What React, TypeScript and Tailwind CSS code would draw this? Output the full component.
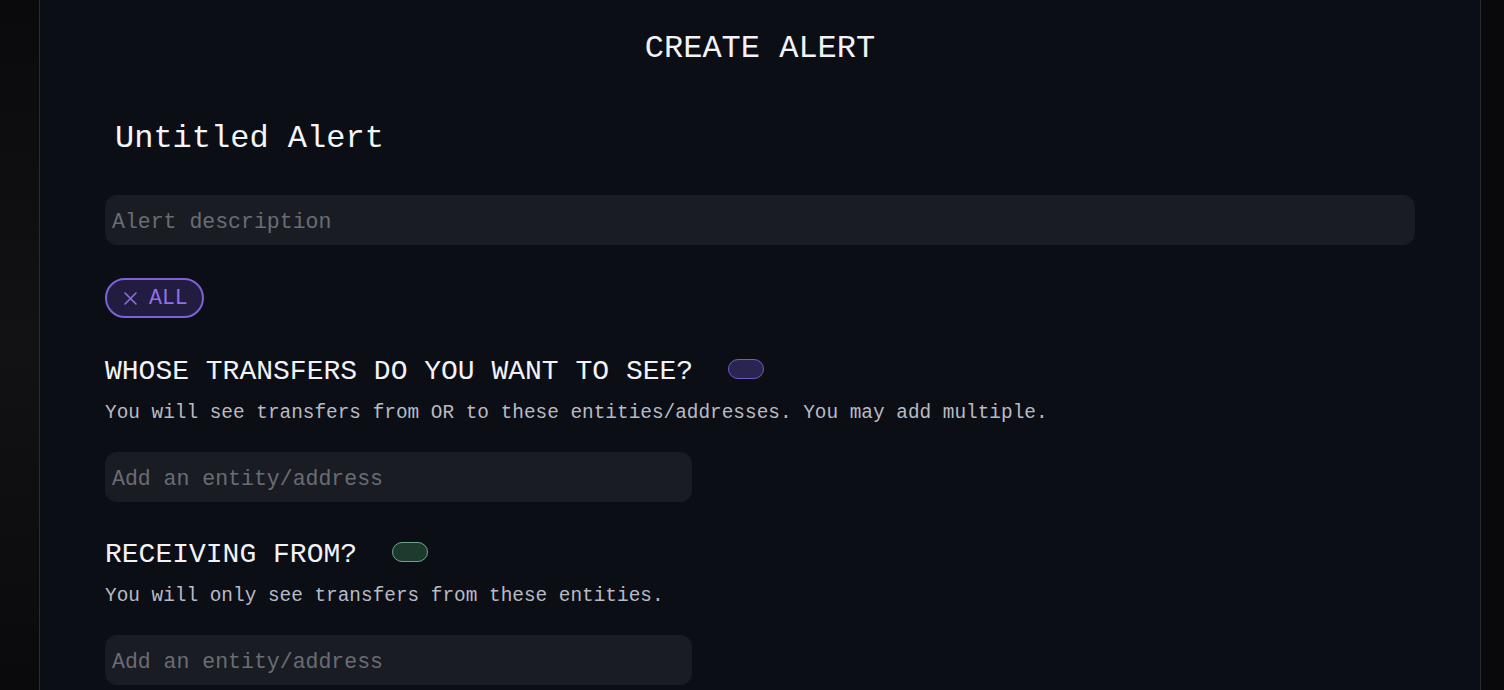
import React, { useState } from 'react';

const mono = "font-['Liberation_Mono',monospace]";

interface ToggleProps {
  tone: 'purple' | 'green';
}

const Toggle: React.FC<ToggleProps> = ({ tone }) => (
  <span
    className={
      tone === 'purple'
        ? 'block h-[20px] w-[36px] -translate-y-[1px] rounded-full border border-[#6e5bc9] bg-[#2a2450]'
        : 'block h-[20px] w-[36px] -translate-y-[1px] rounded-full border border-[#6aa58a] bg-[#1d3a2e]'
    }
  />
);

interface SectionProps {
  title: string;
  hint: string;
  tone: 'purple' | 'green';
  first?: boolean;
}

const EntitySection: React.FC<SectionProps> = ({ title, hint, tone, first }) => {
  const [value, setValue] = useState('');
  return (
    <div className={first ? 'mt-[34px]' : 'mt-[33px]'}>
      <div className="flex items-center gap-[35px]">
        <h2 className="translate-y-[2px] text-[28px] leading-[36px] text-[#f2f3f7]">{title}</h2>
        <Toggle tone={tone} />
      </div>
      <p className="mt-[13px] text-[19.4px] leading-[24px] text-[#b9bbc4]">{hint}</p>
      <input
        value={value}
        onChange={(e) => setValue(e.target.value)}
        placeholder="Add an entity/address"
        className={`mt-[27px] block h-[50px] w-[587px] rounded-[12px] bg-[#1a1c24] px-[7px] pt-[4px] text-[21.5px] text-[#e5e6ea] placeholder:text-[#6a6c74] outline-none ${mono}`}
      />
    </div>
  );
};

const App: React.FC = () => {
  const [description, setDescription] = useState('');

  return (
    <div className={`flex h-[690px] w-full overflow-hidden bg-[#0a0a0d] ${mono}`}>
      <div className="w-[39px] shrink-0 bg-gradient-to-b from-[#0a0a0c] via-[#121214] to-[#0a0a0c]" />
      <main className="flex-1 border-x border-[#2a2c33] bg-[#0c0e16] px-[65px]">
        <h1 className="mt-[29px] text-center text-[32px] leading-[40px] font-medium text-[#f2f3f7]">CREATE ALERT</h1>

        <div className="mt-[48px] pl-[10px] text-[32px] leading-[44px] text-[#f4f5f8]">Untitled Alert</div>

        <input
          value={description}
          onChange={(e) => setDescription(e.target.value)}
          placeholder="Alert description"
          className={`mt-[34px] block h-[50px] w-full rounded-[12px] bg-[#1a1c24] px-[7px] pt-[4px] text-[21.5px] text-[#e5e6ea] placeholder:text-[#6a6c74] outline-none ${mono}`}
        />

        <button
          className={`mt-[33px] flex h-[40px] w-[99px] items-center gap-[12px] rounded-full border-2 border-[#7c62d6] bg-[#221d40] pl-[17px] text-[21.5px] text-[#8f70e8] ${mono}`}
        >
          <svg width="13" height="13" viewBox="0 0 13 13" className="shrink-0">
            <path d="M1 1L12 12M12 1L1 12" stroke="#8f70e8" strokeWidth="1.5" strokeLinecap="round" />
          </svg>
          <span className="pt-[1px]">ALL</span>
        </button>

        <EntitySection
          first
          title="WHOSE TRANSFERS DO YOU WANT TO SEE?"
          hint="You will see transfers from OR to these entities/addresses. You may add multiple."
          tone="purple"
        />
        <EntitySection
          title="RECEIVING FROM?"
          hint="You will only see transfers from these entities."
          tone="green"
        />
      </main>
      <div className="w-[23px] shrink-0 bg-[#09090b]" />
    </div>
  );
};

export default App;
